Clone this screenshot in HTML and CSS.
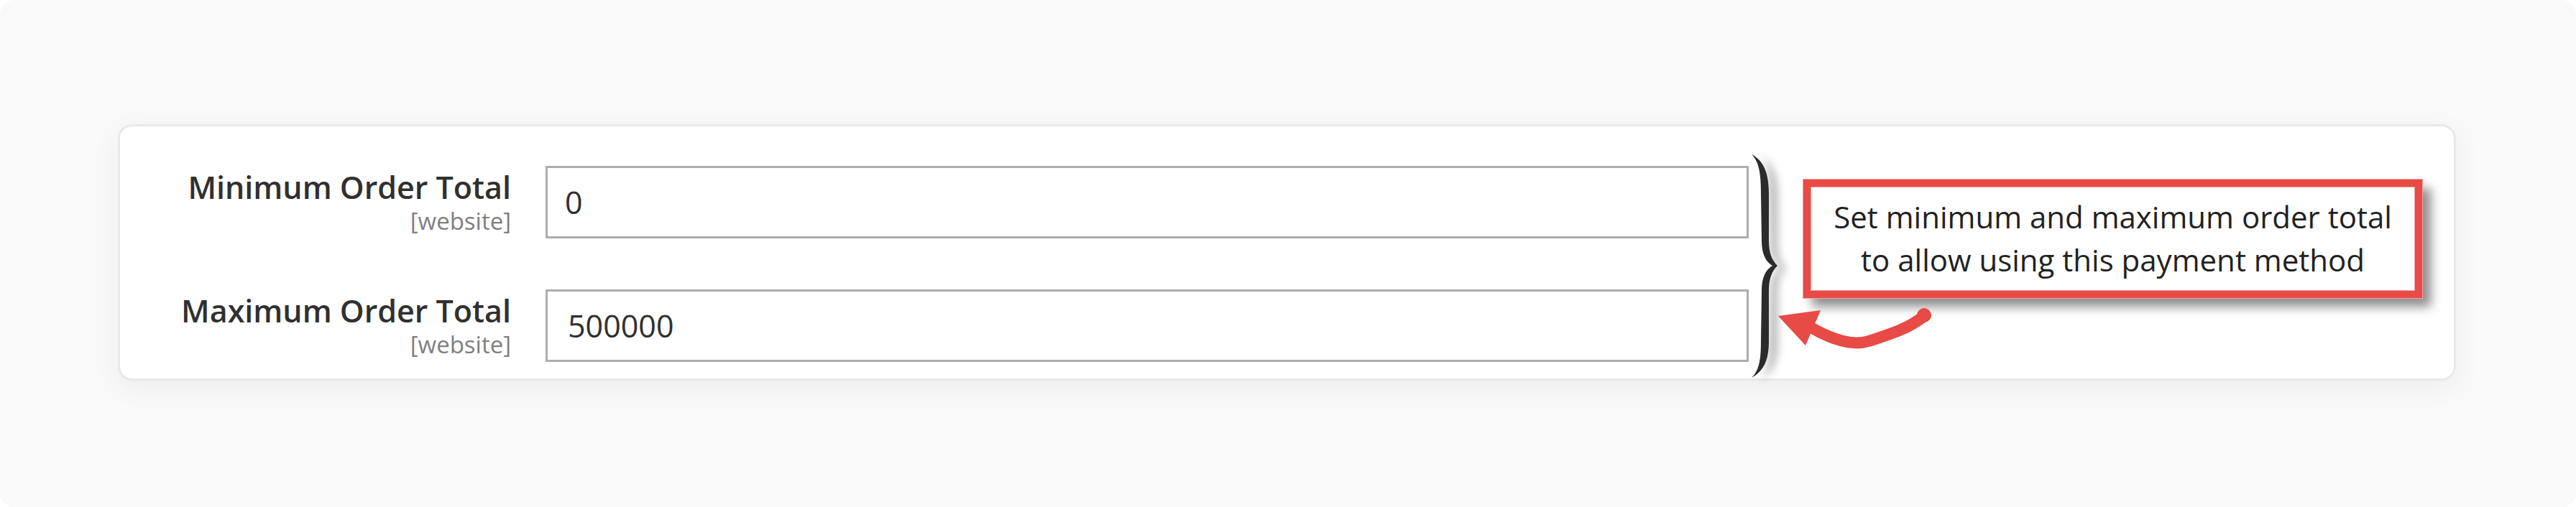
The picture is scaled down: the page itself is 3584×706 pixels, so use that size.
FILE: index.html
```html
<!DOCTYPE html>
<html>
<head>
  <meta charset="utf-8">
  <meta name="viewport" content="width=device-width, initial-scale=1.0">
  <title>Payment Method - Order Total</title>
  <link rel="stylesheet" href="styles.css">
</head>
<body>
<div class="page">
  <section class="card">
    <div class="fields">
      <div class="field-label">
        <label for="min-total">Minimum Order Total</label>
        <span class="scope">[website]</span>
      </div>
      <input id="min-total" class="field-input" type="text" value="0">

      <div class="field-label">
        <label for="max-total">Maximum Order Total</label>
        <span class="scope">[website]</span>
      </div>
      <input id="max-total" class="field-input field-input-wide" type="text" value="500000">
    </div>

    <div class="callout">Set minimum and maximum order total<br>to allow using this payment method</div>

    <!-- brace + arrow drawn over the card, in page coordinates -->
    <svg class="annotation" width="3247" height="351" viewBox="167 176 3247 351">
      <path class="brace" d="M2437 215 C2453 223 2461 240 2461 270 L2461 335 C2461 352 2465 362 2473 370 C2465 378 2461 388 2461 405 L2461 475 C2461 503 2453 517 2437 526 C2448 515 2450 500 2450 475 L2451 405 C2451 386 2457 375 2466 370 C2457 365 2451 354 2451 335 L2450 270 C2450 243 2448 226 2437 215 Z"/>
      <path class="arrow-tail" d="M2518 455 C2548 473 2578 482 2600 475 C2628 466 2655 458 2677 440"/>
      <circle class="arrow-dot" cx="2677" cy="439" r="10"/>
      <polygon class="arrow-head" points="2474,440 2533,432 2512,481"/>
    </svg>
  </section>
</div>
</body>
</html>
```

FILE: styles.css
```css
body { margin: 0; background: #fff; font-family: "Open Sans", Arial, sans-serif; color: #303030; }
.page { box-sizing: border-box; height: 706px; padding: 173px 0 0 164px; background: #f9f9f9; border-radius: 20px; }
.card { position: relative; box-sizing: border-box; width: 3253px; height: 357px; padding-top: 55px; display: flex; align-items: flex-start; background: #fff; border: 3px solid #e9e9e9; border-radius: 20px; box-shadow: 0 10px 40px rgba(0, 0, 0, 0.05); }
.fields { display: grid; grid-template-columns: 544px 1674px; grid-auto-rows: 101px; column-gap: 48px; row-gap: 71px; }
.field-label { text-align: right; padding-top: 4px; }
.field-label label { display: block; font-size: 43px; font-weight: 600; line-height: 52px; color: #303030; }
.scope { display: block; margin-top: 1px; font-size: 33px; line-height: 40px; color: #808080; }
.field-input { box-sizing: border-box; width: 1674px; height: 101px; margin: 0; padding: 0 0 0 24px; border: 3px solid #adadad; font-family: "Open Sans", Arial, sans-serif; font-size: 43px; color: #303030; background: #fff; outline: none; }
.field-input-wide { padding-left: 28px; }
.callout { box-sizing: border-box; width: 861px; height: 165px; margin: 19px 0 0 76px; padding-top: 12px; border: 10px solid #e84a45; background: #fff; font-size: 42px; line-height: 60px; color: #222; text-align: center; box-shadow: 0 0 0 1px #f4a3a0, inset 0 0 0 1px #f4a3a0, 12px 12px 14px rgba(0, 0, 0, 0.45); }
.annotation { position: absolute; left: 0; top: 0; overflow: visible; pointer-events: none; }
.brace { fill: #2b2b2b; filter: drop-shadow(12px 3px 6px rgba(0, 0, 0, 0.3)); }
.arrow-tail { fill: none; stroke: #e84a45; stroke-width: 16; stroke-linecap: round; }
.arrow-dot, .arrow-head { fill: #e84a45; }
```
